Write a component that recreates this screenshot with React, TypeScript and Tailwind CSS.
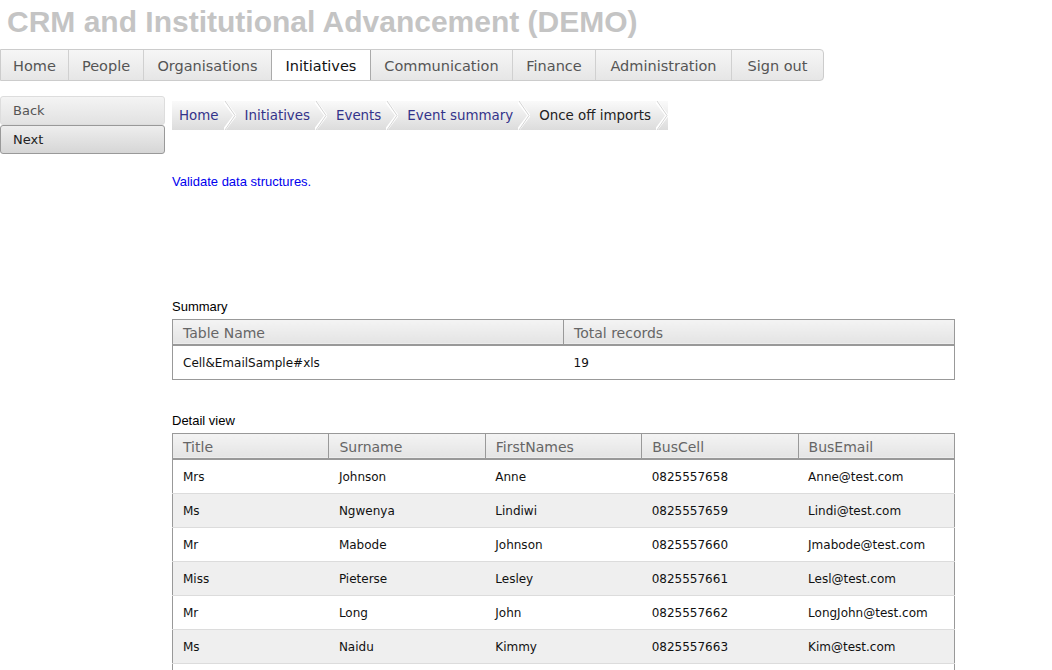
import React from "react";

const NAV: [string, number][] = [
  ["Home", 68],
  ["People", 75],
  ["Organisations", 128],
  ["Initiatives", 100],
  ["Communication", 142],
  ["Finance", 83],
  ["Administration", 136],
  ["Sign out", 91],
];
const CRUMBS = ["Home", "Initiatives", "Events", "Event summary", "Once off imports"];

const ROWS = [
  ["Mrs", "Johnson", "Anne", "0825557658", "Anne@test.com"],
  ["Ms", "Ngwenya", "Lindiwi", "0825557659", "Lindi@test.com"],
  ["Mr", "Mabode", "Johnson", "0825557660", "Jmabode@test.com"],
  ["Miss", "Pieterse", "Lesley", "0825557661", "Lesl@test.com"],
  ["Mr", "Long", "John", "0825557662", "LongJohn@test.com"],
  ["Ms", "Naidu", "Kimmy", "0825557663", "Kim@test.com"],
  ["Mr", "Smith", "Peter", "0825557664", "Peter@test.com"],
];

const verdana = "font-['DejaVu_Sans',Verdana,sans-serif]";
const arial = "font-['Liberation_Sans',Arial,sans-serif]";

function Chevron() {
  return (
    <svg width="12" height="29" viewBox="0 0 12 29" className="shrink-0">
      <path d="M0 0 L11 14.5 L0 29" fill="none" stroke="#fff" strokeWidth="3" />
      <path d="M1 0 L11 14.5 L1 29" fill="none" stroke="#d4d4d4" strokeWidth="1" />
    </svg>
  );
}

function HeaderCell({ children, last }: { children: React.ReactNode; last?: boolean }) {
  return (
    <th
      className={`h-[26px] px-[10px] pt-[3px] text-left font-normal text-[14px] text-[#666] bg-gradient-to-b from-[#f4f4f4] to-[#e4e4e4] border-b-2 border-[#999] ${last ? "" : "border-r border-r-[#999]"}`}
    >
      {children}
    </th>
  );
}

export default function App() {
  return (
    <div className={`w-[1052px] h-[670px] overflow-hidden bg-white ${arial}`}>
      <h1 className="pl-[7px] pt-[4px] h-[49px] text-[30px] leading-[36px] font-bold text-[#c4c4c4] whitespace-nowrap">
        CRM and Institutional Advancement (DEMO)
      </h1>

      {/* Main nav */}
      <div className={`flex w-[824px] h-[32px] border border-[#ccc] rounded-r-[4px] bg-gradient-to-b from-[#f6f6f6] to-[#e6e6e6] ${verdana}`}>
        {NAV.map(([n, w], i) => (
          <div
            key={n}
            style={{ width: w }}
            className={`flex items-center justify-center pt-[3px] whitespace-nowrap text-[14.5px] ${i < NAV.length - 1 ? "border-r border-[#d0d0d0]" : ""} ${n === "Initiatives" ? "bg-white text-[#111] border-l border-l-[#aaa] border-r-[#aaa] -ml-px" : "text-[#555]"}`}
          >
            {n}
          </div>
        ))}
      </div>

      <div className="flex mt-[15px]">
        {/* Back / Next */}
        <div className={`w-[165px] shrink-0 flex flex-col ${verdana}`}>
          <div className="h-[29px] pl-[12px] flex items-center text-[13px] text-[#555] border border-[#ddd] rounded-[3px] bg-gradient-to-b from-[#f4f4f4] to-[#e2e2e2]">
            Back
          </div>
          <div className="h-[29px] pl-[12px] flex items-center text-[13px] text-[#222] border border-[#999] rounded-[3px] bg-gradient-to-b from-[#eeeeee] to-[#d6d6d6]">
            Next
          </div>
        </div>

        <div className="ml-[7px] flex-1">
          {/* Breadcrumb */}
          <div className={`mt-[5px] inline-flex h-[29px] bg-gradient-to-b from-[#fafafa] to-[#dcdcdc] ${verdana}`}>
            {CRUMBS.map((c, i) => (
              <div key={c} className="flex items-center">
                <span className={`text-[13.4px] pt-[2px] whitespace-nowrap ${i === 0 ? "pl-[7px]" : "pl-[9px]"} pr-[5px] ${i === CRUMBS.length - 1 ? "text-[#222]" : "text-[#33338a]"}`}>
                  {c}
                </span>
                <Chevron />
              </div>
            ))}
          </div>

          <p className="mt-[42px] text-[13px] text-[#0000ee]">Validate data structures.</p>

          <p className="mt-[107px] text-[13px] text-black leading-[16px]">Summary</p>
          <table className={`mt-[4px] w-[783px] border-collapse border border-[#999] table-fixed ${verdana}`}>
            <thead>
              <tr>
                <HeaderCell>Table Name</HeaderCell>
                <HeaderCell last>Total records</HeaderCell>
              </tr>
            </thead>
            <tbody>
              <tr className="h-[34px]">
                <td className="px-[10px] pt-[2px] text-[12px] text-[#111]">Cell&amp;EmailSample#xls</td>
                <td className="px-[10px] pt-[2px] text-[12px] text-[#111]">19</td>
              </tr>
            </tbody>
          </table>

          <p className="mt-[33px] text-[13px] text-black leading-[16px]">Detail view</p>
          <table className={`mt-[4px] w-[783px] border-collapse border border-[#999] table-fixed ${verdana}`}>
            <thead>
              <tr>
                {["Title", "Surname", "FirstNames", "BusCell", "BusEmail"].map((h, i) => (
                  <HeaderCell key={h} last={i === 4}>{h}</HeaderCell>
                ))}
              </tr>
            </thead>
            <tbody>
              {ROWS.map((r, i) => (
                <tr key={i} className={`h-[34px] border-b border-[#dcdcdc] ${i % 2 ? "bg-[#efefef]" : "bg-white"}`}>
                  {r.map((c, j) => (
                    <td key={j} className="px-[10px] pt-[2px] text-[12px] text-[#111]">{c}</td>
                  ))}
                </tr>
              ))}
            </tbody>
          </table>
        </div>
      </div>
    </div>
  );
}
